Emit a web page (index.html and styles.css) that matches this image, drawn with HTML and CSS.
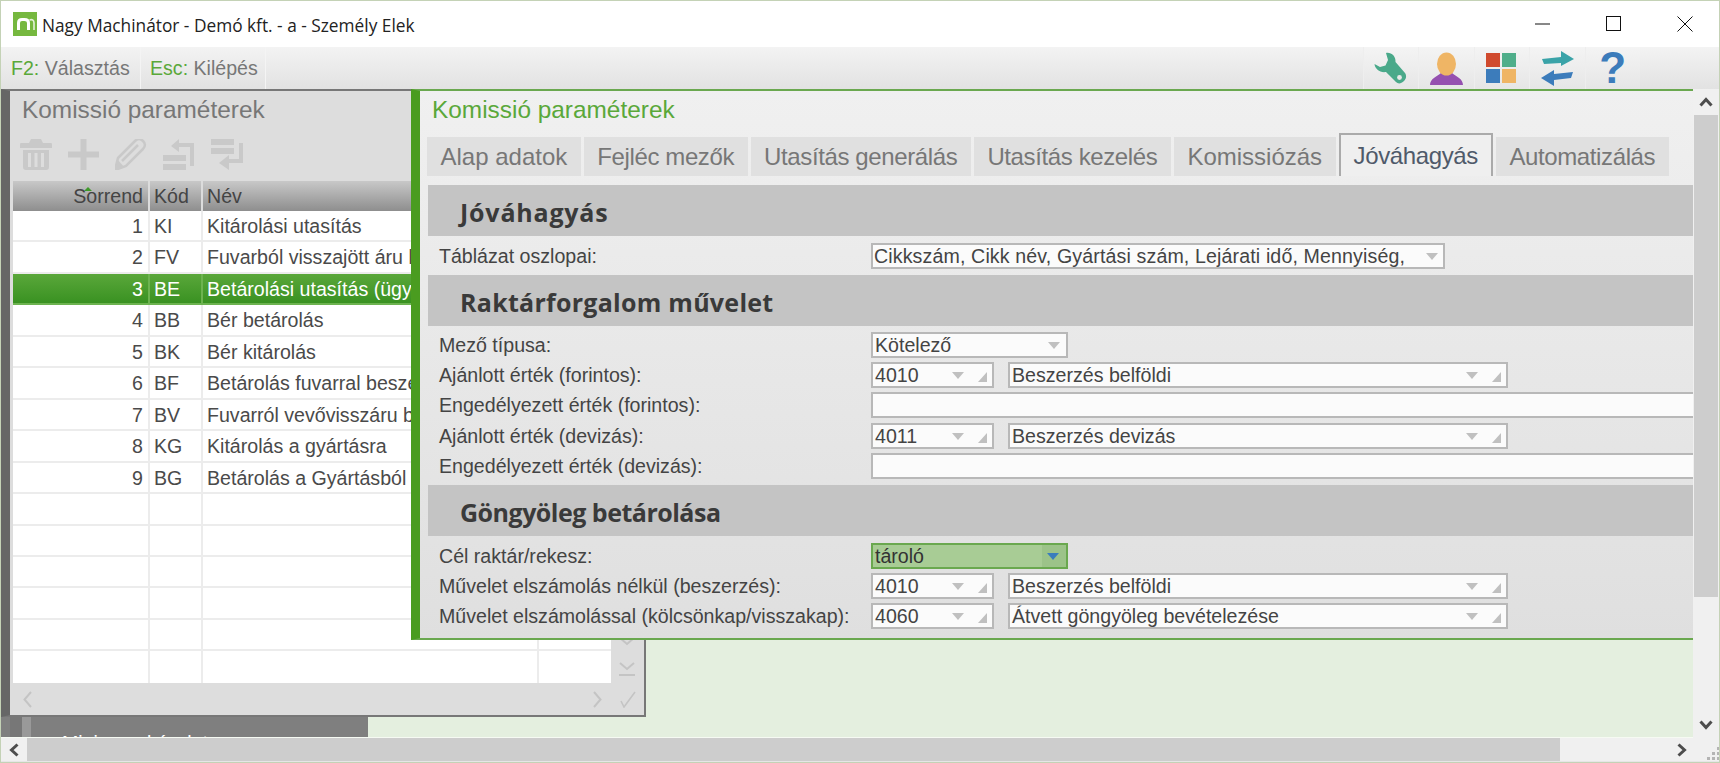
FILE: index.html
```html
<!DOCTYPE html>
<html lang="hu">
<head>
<meta charset="utf-8">
<title>Nagy Machinátor</title>
<link rel="stylesheet" href="styles.css">
</head>
<body>
<div class="window">
  <header class="titlebar">
    <svg class="logo" viewBox="0 0 24 24"><rect width="24" height="24" fill="#76b83f"/><path d="M5.500 18V11C5.500 8.500 7 7.500 9 7.500h2.500c2.500 0 4 1.500 4 3.500v7" fill="none" stroke="#fff" stroke-width="3"/><path d="M16.500 8c2.500-1 4.500 0 4.500 3v7" fill="none" stroke="#e4f1d8" stroke-width="1.600"/></svg>
    <span class="apptitle">Nagy Machinátor - Demó kft. - a - Személy Elek</span>
    <div class="winctl">
      <svg class="wc" viewBox="0 0 16 16"><path d="M0 8h15" stroke="#111" fill="none"/></svg>
      <svg class="wc" viewBox="0 0 16 16"><rect x=".5" y=".5" width="14" height="14" stroke="#111" fill="none"/></svg>
      <svg class="wc" viewBox="0 0 16 16"><path d="M.5 .5l15 15M15.500 .5l-15 15" stroke="#111" fill="none"/></svg>
    </div>
  </header>

  <nav class="toolbar">
    <div class="fkey fkey-a"><b>F2:</b> Választás</div>
    <div class="fkey fkey-b"><b>Esc:</b> Kilépés</div>
    <div class="tools">
      <div class="tool"><svg width="33" height="33" viewBox="0 0 33 33"><path d="M12 1C17 0 22 4 21.500 10L31 21C33 24 32 27 30 29C27 32 24 32 22 30L12 20C6 21 1 17 .5 12L6 15L11.500 13.500L14 8Z" fill="#4aa98a"/><circle cx="25.500" cy="25.500" r="2.400" fill="#e8e8e8"/></svg></div>
      <div class="tool"><svg width="33" height="33" viewBox="0 0 33 33"><path d="M0 33C0 27 6 25 11 21H22C27 25 33 27 33 33Z" fill="#9550b0"/><ellipse cx="16.500" cy="12" rx="9.500" ry="11.500" fill="#efb565"/></svg></div>
      <div class="tool"><svg width="33" height="33" viewBox="0 0 33 33"><rect x="1" y="1" width="14" height="14" fill="#d04a2e"/><rect x="17" y="1" width="14" height="14" fill="#4fae8a"/><rect x="1" y="17" width="14" height="14" fill="#3c7cbb"/><rect x="17" y="17" width="14" height="14" fill="#efb565"/></svg></div>
      <div class="tool"><svg width="35" height="35" viewBox="0 0 35 35"><path d="M2 8L21 6V0L34 8L21 15V12L4 13Z" fill="#3aa3a8"/><path d="M33 21L14 23V19L1 27L14 35V29L31 27Z" fill="#3c7cbb"/></svg></div>
      <div class="tool"><span class="help">?</span></div>
    </div>
  </nav>

  <main class="main">
    <div class="desktop">
      <div class="under"><span class="under-a"></span><span class="under-text">Minimum készlet</span></div>

      <section class="dlg-left">
        <h2 class="dlg-title">Komissió paraméterek</h2>
        <div class="dlg-tools">
          <svg width="32" height="31" viewBox="0 0 32 31" fill="#c9c9c9"><path d="M11 0h10l2 4h8c1 0 1 1 1 3v2H0V7c0-2 0-3 1-3h8zM3 11h26v17c0 2-1 3-3 3H6c-2 0-3-1-3-3zM8 14v14h3V14zM14.500 14v14h3V14zM21 14v14h3V14z" fill-rule="evenodd"/></svg>
          <svg width="31" height="31" viewBox="0 0 31 31" fill="#c9c9c9"><path d="M12.500 0h6v12.500H31v6H18.500V31h-6V18.500H0v-6h12.500z"/></svg>
          <svg width="32" height="31" viewBox="0 0 32 31"><path d="M0 31L3 19 20 2c3-3 6-2 8 0s3 5 0 8L11 27Z" fill="none" stroke="#c9c9c9" stroke-width="2.500"/><path d="M7 22L23 6" stroke="#c9c9c9" stroke-width="2.500"/><path d="M0 31L3 21 9 28Z" fill="#c9c9c9"/></svg>
          <svg width="32" height="31" viewBox="0 0 32 31" fill="#c9c9c9"><rect y="16" width="23" height="6"/><rect y="25" width="23" height="6"/><path d="M8 7L16 0V4H31V27H27V8H16V13Z"/></svg>
          <svg width="32" height="31" viewBox="0 0 32 31" fill="#c9c9c9"><rect width="23" height="6"/><rect y="9" width="23" height="6"/><path d="M28 4H32V24H18V31L8 24L18 16V20H28Z"/></svg>
        </div>
        <div class="grid-wrap">
          <div class="grid">
            <div class="gr gr-head"><span class="c c1"><i class="sortmark"></i>Sorrend</span><span class="c c2">Kód</span><span class="c c3">Név</span><span class="c c4"></span></div>
            <div class="gr"><span class="c c1">1</span><span class="c c2">KI</span><span class="c c3">Kitárolási utasítás</span><span class="c c4"></span></div>
            <div class="gr"><span class="c c1">2</span><span class="c c2">FV</span><span class="c c3">Fuvarból visszajött áru bevételezése</span><span class="c c4"></span></div>
            <div class="gr gr-sel"><span class="c c1">3</span><span class="c c2">BE</span><span class="c c3">Betárolási utasítás (ügyfél)</span><span class="c c4"></span></div>
            <div class="gr"><span class="c c1">4</span><span class="c c2">BB</span><span class="c c3">Bér betárolás</span><span class="c c4"></span></div>
            <div class="gr"><span class="c c1">5</span><span class="c c2">BK</span><span class="c c3">Bér kitárolás</span><span class="c c4"></span></div>
            <div class="gr"><span class="c c1">6</span><span class="c c2">BF</span><span class="c c3">Betárolás fuvarral beszerzésből</span><span class="c c4"></span></div>
            <div class="gr"><span class="c c1">7</span><span class="c c2">BV</span><span class="c c3">Fuvarról vevővisszáru betárolás</span><span class="c c4"></span></div>
            <div class="gr"><span class="c c1">8</span><span class="c c2">KG</span><span class="c c3">Kitárolás a gyártásra</span><span class="c c4"></span></div>
            <div class="gr"><span class="c c1">9</span><span class="c c2">BG</span><span class="c c3">Betárolás a Gyártásból</span><span class="c c4"></span></div>
            <div class="gr"><span class="c c1"></span><span class="c c2"></span><span class="c c3"></span><span class="c c4"></span></div>
            <div class="gr"><span class="c c1"></span><span class="c c2"></span><span class="c c3"></span><span class="c c4"></span></div>
            <div class="gr"><span class="c c1"></span><span class="c c2"></span><span class="c c3"></span><span class="c c4"></span></div>
            <div class="gr"><span class="c c1"></span><span class="c c2"></span><span class="c c3"></span><span class="c c4"></span></div>
            <div class="gr"><span class="c c1"></span><span class="c c2"></span><span class="c c3"></span><span class="c c4"></span></div>
            <div class="gr gr-last"><span class="c c1"></span><span class="c c2"></span><span class="c c3"></span><span class="c c4"></span></div>
          </div>
          <div class="grid-side">
            <svg width="16" height="9" viewBox="0 0 16 9"><path d="M1 1l7 6 7-6" fill="none" stroke="#c4c4c4" stroke-width="2"/></svg>
            <svg width="16" height="14" viewBox="0 0 16 14"><path d="M1 1l7 6 7-6" fill="none" stroke="#c4c4c4" stroke-width="2"/><path d="M0 13h16" stroke="#c4c4c4" stroke-width="2"/></svg>
          </div>
        </div>
        <div class="dlg-foot">
          <svg width="9" height="17" viewBox="0 0 9 17"><path d="M8 1L1.500 8.500 8 16" fill="none" stroke="#c4c4c4" stroke-width="2"/></svg>
          <svg class="foot-r" width="9" height="17" viewBox="0 0 9 17"><path d="M1 1l6.500 7.500L1 16" fill="none" stroke="#c4c4c4" stroke-width="2"/></svg>
          <svg width="16" height="17" viewBox="0 0 16 17"><path d="M1 10l3 6L15 1" fill="none" stroke="#c4c4c4" stroke-width="1.600"/></svg>
        </div>
      </section>

      <section class="dlg-right">
        <h2 class="dlg-title dlg-title-green">Komissió paraméterek</h2>
        <div class="tabs">
          <div class="tab">Alap adatok</div>
          <div class="tab tab-tight">Fejléc mezők</div>
          <div class="tab tab-tight">Utasítás generálás</div>
          <div class="tab tab-tight">Utasítás kezelés</div>
          <div class="tab">Komissiózás</div>
          <div class="tab tab-on tab-tight">Jóváhagyás</div>
          <div class="tab tab-tight">Automatizálás</div>
        </div>

        <h3 class="sect sect-a">Jóváhagyás</h3>
        <div class="rows rows-a">
          <div class="frow"><label>Táblázat oszlopai:</label>
            <div class="inp w-cols"><span class="val">Cikkszám, Cikk név, Gyártási szám, Lejárati idő, Mennyiség,</span><i class="tri"></i></div></div>
        </div>

        <h3 class="sect sect-b">Raktárforgalom művelet</h3>
        <div class="rows rows-b">
          <div class="frow"><label>Mező típusa:</label>
            <div class="inp w-type"><span class="val">Kötelező</span><i class="tri"></i></div></div>
          <div class="frow"><label>Ajánlott érték (forintos):</label>
            <div class="inp w-code"><span class="val">4010</span><i class="tri"></i><i class="corner"></i></div>
            <div class="inp w-name"><span class="val">Beszerzés belföldi</span><i class="tri"></i><i class="corner"></i></div></div>
          <div class="frow"><label>Engedélyezett érték (forintos):</label>
            <div class="inp w-full"></div></div>
          <div class="frow"><label>Ajánlott érték (devizás):</label>
            <div class="inp w-code"><span class="val">4011</span><i class="tri"></i><i class="corner"></i></div>
            <div class="inp w-name"><span class="val">Beszerzés devizás</span><i class="tri"></i><i class="corner"></i></div></div>
          <div class="frow"><label>Engedélyezett érték (devizás):</label>
            <div class="inp w-full"></div></div>
        </div>

        <h3 class="sect sect-c">Göngyöleg betárolása</h3>
        <div class="rows rows-c">
          <div class="frow"><label>Cél raktár/rekesz:</label>
            <div class="inp w-type inp-focus"><span class="val">tároló</span><span class="drop"><i class="tri tri-blue"></i></span></div></div>
          <div class="frow"><label>Művelet elszámolás nélkül (beszerzés):</label>
            <div class="inp w-code"><span class="val">4010</span><i class="tri"></i><i class="corner"></i></div>
            <div class="inp w-name"><span class="val">Beszerzés belföldi</span><i class="tri"></i><i class="corner"></i></div></div>
          <div class="frow"><label>Művelet elszámolással (kölcsönkap/visszakap):</label>
            <div class="inp w-code"><span class="val">4060</span><i class="tri"></i><i class="corner"></i></div>
            <div class="inp w-name"><span class="val">Átvett göngyöleg bevételezése</span><i class="tri"></i><i class="corner"></i></div></div>
        </div>
      </section>
    </div>

    <aside class="vscroll">
      <div class="sb-btn"><svg width="14" height="10" viewBox="0 0 14 10"><path d="M1.500 8.500L7 2.500l5.500 6" fill="none" stroke="#4d4d4d" stroke-width="3"/></svg></div>
      <div class="vthumb"></div>
      <div class="vtrack"><svg width="14" height="10" viewBox="0 0 14 10"><path d="M1.500 1.500L7 7.500l5.500-6" fill="none" stroke="#4d4d4d" stroke-width="3"/></svg></div>
    </aside>
  </main>

  <footer class="hscroll">
    <div class="sb-left"><svg width="10" height="14" viewBox="0 0 10 14"><path d="M8.500 1.500L2.500 7l6 5.500" fill="none" stroke="#4d4d4d" stroke-width="3"/></svg></div>
    <div class="hthumb"></div>
    <div class="htrack">
      <svg width="10" height="14" viewBox="0 0 10 14"><path d="M1.500 1.500L7.500 7l-6 5.500" fill="none" stroke="#4d4d4d" stroke-width="3"/></svg>
      <svg class="grip" width="13" height="13" viewBox="0 0 13 13" fill="#b4b4b4"><rect x="10" y="0" width="3" height="3"/><rect x="5" y="5" width="3" height="3"/><rect x="10" y="5" width="3" height="3"/><rect x="0" y="10" width="3" height="3"/><rect x="5" y="10" width="3" height="3"/><rect x="10" y="10" width="3" height="3"/></svg>
    </div>
  </footer>
</div>
</body>
</html>
```
FILE: styles.css
```css
* { box-sizing: border-box; }
html, body { margin: 0; padding: 0; height: 100%; overflow: hidden; background: #fff; }
body { font-family: "Liberation Sans", Arial, sans-serif; color: #444; }

.window { width: 1720px; height: 763px; border: 1px solid #c4d2b6; display: flex; flex-direction: column; overflow: hidden; background: #fff; }

/* title bar */
.titlebar { height: 46px; flex: none; display: flex; align-items: center; background: #fff; padding-left: 12px; }
.logo { width: 24px; height: 24px; margin-top: -1px; }
.apptitle { font-family: "Open Sans", sans-serif; font-size: 17.300px; color: #222; margin-left: 5px; padding-top: 2px; }
.winctl { margin-left: auto; display: flex; gap: 55px; margin-right: 26px; }
.wc { width: 16px; height: 16px; display: block; }

/* toolbar */
.toolbar { height: 42px; flex: none; display: flex; background: linear-gradient(#f3f3f3, #e2e2e2); }
.fkey { height: 100%; display: flex; align-items: center; font-size: 19.600px; color: #777; white-space: pre; }
.fkey b { font-weight: 400; color: #5aa83a; }
.fkey-a { width: 140px; padding-left: 10px; border-right: 1px solid #f4f4f4; }
.fkey-b { width: 125px; padding-left: 9px; border-right: 1px solid #f4f4f4; }
.tools { margin-left: auto; margin-right: 79px; display: flex; }
.tool { width: 55.500px; display: flex; align-items: center; justify-content: center; border-left: 1px solid #eeeeee; background: linear-gradient(#f4f4f4, #e6e6e6); }
.help { font-weight: 700; font-size: 44px; line-height: 1; color: #3c7cbb; }

/* main */
.main { height: 649px; flex: none; display: flex; }
.desktop { width: 1692px; flex: none; position: relative; background: #e4efdf; border-bottom: 1px solid #f6faf3; overflow: hidden; }

.under { position: absolute; left: 0; top: 628px; width: 367px; height: 21px; background: #7f7f7f; overflow: hidden; }
.under-a { position: absolute; left: 9px; top: 0; width: 21px; height: 21px; background: linear-gradient(90deg, #777 0 55%, #999 55%); }
.under-text { position: absolute; left: 61px; top: 15px; color: #fff; font-size: 19.600px; line-height: 22px; }

/* dialogs */
.dlg-left { position: absolute; left: 0; top: 0; width: 645px; height: 628px; background: #dddddd; border-style: solid; border-color: #777; border-width: 2px 2px 2px 9px; display: flex; flex-direction: column; border-left-color: #666; }
.dlg-right { position: absolute; left: 410px; top: 0; width: 1282px; height: 551px; border-style: solid; border-color: #6aa84f; border-width: 2px 0 2px 9px; border-left-color: #4a9c20; background: linear-gradient(#f0f0f0, #dfdfdf); overflow: hidden; }
.dlg-title { margin: 0; height: 42px; padding-left: 12px; font-size: 24.400px; font-weight: 400; line-height: 38px; color: #777; white-space: nowrap; }
.dlg-title-green { color: #5aa83a; }

.dlg-tools { height: 48px; flex: none; display: flex; align-items: center; gap: 16px; padding: 0 0 5px 10px; }

/* grid */
.grid-wrap { display: flex; height: 502px; flex: none; padding-left: 3px; }
.grid { width: 598px; flex: none; display: flex; flex-direction: column; background: #fff; }
.gr { height: 31.467px; flex: none; display: grid; grid-template-columns: 137px 53px 336px 72px; font-size: 19.600px; line-height: 31px; color: #4a4a4a; }
.c { display: block; padding: 0 4px; border-right: 2px solid #ececec; border-bottom: 2px solid #ececec; white-space: nowrap; overflow: hidden; }
.c1 { text-align: right; padding-right: 5px; }
.c4 { border-right: 0; }
.gr-last .c { border-bottom: 0; }
.gr-head { height: 30px; background: linear-gradient(#c8c8c8, #8e8e8e); color: #444; }
.gr-head .c { border-bottom: 0; border-right-color: #dcdcdc; position: relative; }
.sortmark { position: absolute; right: 56px; top: 6px; width: 0; height: 0; border: 4px solid transparent; border-top: 0; border-bottom: 4px solid #3f9a2a; }
.gr-sel { background: linear-gradient(#5aa73a, #379020); color: #fff; }
.gr-sel .c { border-color: #6db350; }
.grid-side { flex: 1; display: flex; flex-direction: column; align-items: center; padding: 456px 1px 0 0; gap: 16px; }
.dlg-foot { height: 32px; flex: none; display: flex; align-items: center; padding: 0 8px 0 13px; }
.foot-r { margin-left: auto; margin-right: 18px; }

/* tabs */
.tabs { height: 43px; display: flex; align-items: flex-end; gap: 3px; padding-left: 7px; }
.tab { height: 39px; padding: 0 13.500px; font-size: 24px; line-height: 39px; color: #777; background: #e0e0e0; white-space: nowrap; }
.tab-tight { letter-spacing: -.38px; }
.tab-on { height: 43px; line-height: 41px; border: 2px solid #aaa; border-bottom: 0; background: #efefef; color: #4f5a6a; padding: 0 13px; }

/* sections */
.sect { margin: 0 0 0 8px; height: 51px; padding-left: 32px; background: #c4c4c4; font-family: "Open Sans", sans-serif; font-size: 25px; font-weight: 700; line-height: 54px; color: #3a3a3a; white-space: nowrap; }
.sect-a { margin-top: 9px; letter-spacing: .8px; }
.sect-b { letter-spacing: .27px; }
.sect-c { letter-spacing: -.5px; }

.rows { padding-left: 19px; }
.rows-a { padding-top: 7px; height: 39px; }
.rows-b { padding-top: 6px; height: 159px; }
.rows-c { padding-top: 7px; }
.frow { height: 30.200px; display: flex; gap: 14px; white-space: nowrap; }
.rows-a .frow { height: 26px; }
.frow label { width: 432px; margin-right: -14px; flex: none; font-size: 19.600px; line-height: 26px; color: #444; }

.inp { position: relative; height: 26px; flex: none; border: 2px solid #b8b8b8; background: #fbfbfb; font-size: 19.600px; line-height: 22px; color: #444; overflow: hidden; }
.val { position: absolute; left: 2px; top: 0; white-space: nowrap; }
.w-cols { width: 574px; }
.w-cols .val { left: 1px; letter-spacing: .13px; }
.w-type { width: 197px; }
.w-code { width: 123px; }
.w-name { width: 500px; }
.w-full { width: 900px; }

.tri { position: absolute; top: 8px; width: 0; height: 0; border-style: solid; border-width: 7px 6.500px 0; border-color: #c0c0c0 transparent transparent; }
.w-cols > .tri { right: 5px; }
.w-type > .tri { right: 6px; }
.w-code > .tri, .w-name > .tri { right: 28px; }
.corner { position: absolute; right: 5px; bottom: 4px; width: 0; height: 0; border-style: solid; border-width: 0 0 10px 9px; border-color: transparent transparent #c0c0c0; }
.inp-focus { background: #a8cc95; border-color: #6aa84f; color: #333; }
.drop { position: absolute; right: 0; top: 0; bottom: 0; width: 24px; background: #9cc389; }
.tri-blue { left: 5px; border-top-color: #3a7dbd; }

/* scrollbars */
.vscroll { flex: 1; background: #f0f0f0; display: flex; flex-direction: column; padding-left: 1px; padding-right: 1px; }
.sb-btn { height: 26px; flex: none; display: flex; align-items: center; justify-content: center; }
.vthumb { height: 482px; flex: none; background: #cdcdcd; }
.vtrack { flex: 1; display: flex; align-items: flex-end; justify-content: center; padding-bottom: 8px; }
.hscroll { height: 24px; flex: none; display: flex; background: #f0f0f0; border-bottom: 1px solid #e6e6e6; }
.sb-left { width: 26px; flex: none; display: flex; align-items: center; justify-content: center; }
.hthumb { width: 1533px; flex: none; background: #cdcdcd; }
.htrack { flex: 1; display: flex; align-items: center; padding-left: 117px; }
.grip { margin-left: 20px; margin-top: 8px; }
```
